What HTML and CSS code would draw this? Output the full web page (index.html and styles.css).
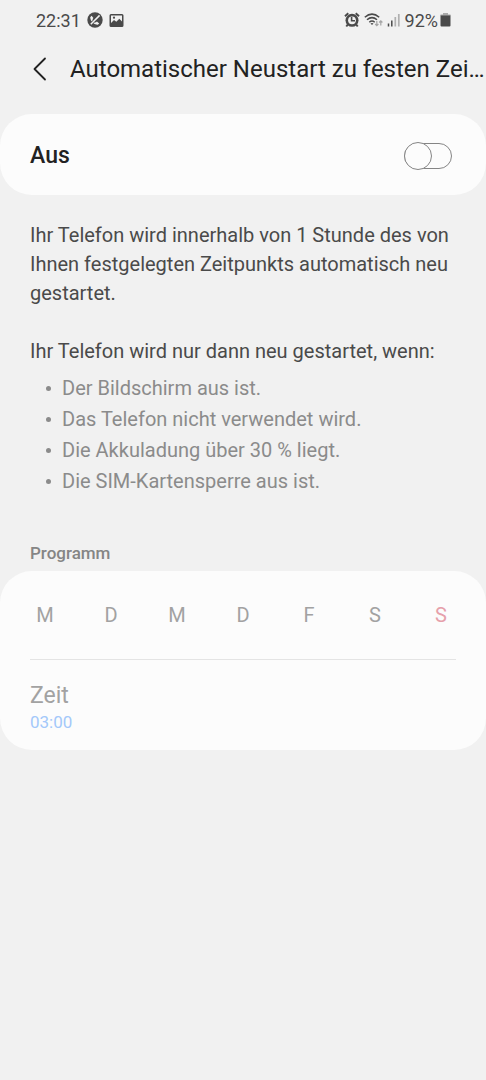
FILE: index.html
```html
<!DOCTYPE html>
<html lang="de">
<head>
<meta charset="utf-8">
<meta name="viewport" content="width=device-width, initial-scale=1">
<title>Automatischer Neustart zu festen Zeiten</title>
<link rel="stylesheet" href="styles.css">
</head>
<body>
<div class="status">
  <div class="status-group">
    <span class="clock">22:31</span>
    <svg class="icon" width="16" height="16" viewBox="0 0 16 16" aria-hidden="true">
      <circle cx="8" cy="8" r="7.7" fill="#4a4a4a"/>
      <path d="M3.2 5.2C3.6 9.6 6.4 12.400 10.800 12.800L12.200 11.400L9.900 9.600L8.800 10.500C7.300 9.900 6.100 8.700 5.500 7.200L6.400 6.100L4.600 3.800Z" fill="#f1f1f1"/>
      <path d="M12.800 3.200L3.600 12.400" stroke="#4a4a4a" stroke-width="3"/>
      <path d="M12.600 3.400L3.800 12.200" stroke="#f1f1f1" stroke-width="1.500"/>
    </svg>
    <svg class="icon" width="15" height="15" viewBox="0 0 15 15" aria-hidden="true">
      <path fill="#4a4a4a" fill-rule="evenodd" d="M2 1H13Q14.500 1 14.500 2.500V12.500Q14.500 14 13 14H2Q.5 14 .5 12.500V2.500Q.5 1 2 1ZM2 2.500V10L5 7L7.300 8.800L10.300 5.800L13 8.500V2.500Z"/>
      <circle cx="5" cy="4.700" r="1.100" fill="#4a4a4a"/>
    </svg>
  </div>
  <div class="status-group status-right">
    <svg width="16" height="16" viewBox="0 0 16 16" aria-hidden="true">
      <circle cx="8" cy="8.300" r="6.500" fill="#4a4a4a"/>
      <path d="M1 4.200L4.300 1.300M15 4.200L11.700 1.300M3.800 12.500L2.300 14.500M12.200 12.500L13.700 14.500" stroke="#4a4a4a" stroke-width="2"/>
      <circle cx="8" cy="8.300" r="3.900" fill="#f1f1f1"/>
      <path d="M7.600 5V8.800H11" fill="none" stroke="#4a4a4a" stroke-width="1.600"/>
    </svg>
    <svg width="19" height="16" viewBox="0 0 19 16" aria-hidden="true">
      <g fill="none" stroke="#4a4a4a" stroke-width="1.500">
        <path d="M.8 5.300Q8 -1 15.200 5.300"/>
        <path d="M3 7.800Q8 3.400 13 7.800"/>
        <path d="M5.300 10.200Q8 7.900 10.700 10.200"/>
      </g>
      <path d="M6.500 11.500Q8 10.300 9.500 11.500L8 13Z" fill="#4a4a4a"/>
      <path d="M12.800 9V13.500M11.200 12L12.800 13.700L14.400 12M16.800 13.500V9M15.200 10.500L16.800 8.800L18.400 10.500" fill="none" stroke="#a5a5a5" stroke-width="1.200"/>
    </svg>
    <svg width="14" height="14" viewBox="0 0 14 14" aria-hidden="true">
      <path d="M1.500 10.500V13.500M4.800 7.500V13.500" stroke="#4a4a4a" stroke-width="1.500"/>
      <path d="M8.300 4V13.500M11.800 1V13.500" stroke="#b0b0b0" stroke-width="1.700"/>
    </svg>
    <span class="battery">92%<svg width="11" height="16" viewBox="0 0 11 16" aria-hidden="true">
      <path d="M3 1H8V2.500H10.500V4H.5V2.500H3Z" fill="#aaa"/>
      <path d="M.5 3.500H10.500V13.500Q10.500 14.500 9.500 14.500H1.500Q.5 14.500 .5 13.500Z" fill="#4a4a4a"/>
    </svg></span>
  </div>
</div>

<header class="header">
  <button class="back" type="button" aria-label="Zurück">
    <svg width="14" height="24" viewBox="0 0 14 24" aria-hidden="true">
      <path d="M12 1.500L1.500 12L12 22.500" fill="none" stroke="#222" stroke-width="1.800" stroke-linecap="round" stroke-linejoin="round"/>
    </svg>
  </button>
  <h1 class="title">Automatischer Neustart zu festen Zeiten</h1>
</header>

<main>
  <section class="card toggle-row">
    <label class="toggle-label" for="restart">Aus</label>
    <input class="switch" id="restart" type="checkbox" role="switch">
  </section>

  <section class="info">
    <p>Ihr Telefon wird innerhalb von 1 Stunde des von Ihnen festgelegten Zeitpunkts automatisch neu gestartet.</p>
    <p>Ihr Telefon wird nur dann neu gestartet, wenn:</p>
    <ul class="conditions">
      <li>Der Bildschirm aus ist.</li>
      <li>Das Telefon nicht verwendet wird.</li>
      <li>Die Akkuladung über 30 % liegt.</li>
      <li>Die SIM-Kartensperre aus ist.</li>
    </ul>
  </section>

  <h2 class="section-title">Programm</h2>
  <section class="card schedule">
    <div class="days">
      <button class="day" type="button" disabled aria-label="Montag">M</button>
      <button class="day" type="button" disabled aria-label="Dienstag">D</button>
      <button class="day" type="button" disabled aria-label="Mittwoch">M</button>
      <button class="day" type="button" disabled aria-label="Donnerstag">D</button>
      <button class="day" type="button" disabled aria-label="Freitag">F</button>
      <button class="day" type="button" disabled aria-label="Samstag">S</button>
      <button class="day sunday" type="button" disabled aria-label="Sonntag">S</button>
    </div>
    <button class="time" type="button" disabled>
      <span class="time-label">Zeit</span>
      <span class="time-value">03:00</span>
    </button>
  </section>
</main>
</body>
</html>
```
FILE: styles.css
```css
* {
  box-sizing: border-box;
}

body {
  margin: 0;
  min-height: 100vh;
  background: #f1f1f1;
  color: #4a4a4a;
  font-family: Roboto, "Liberation Sans", sans-serif;
  font-size: 20px;
  line-height: 29px;
}

button {
  padding: 0;
  border: 0;
  background: none;
  font: inherit;
  color: inherit;
}

h1,
h2,
p,
ul {
  margin: 0;
  padding: 0;
}

svg {
  display: block;
  flex: none;
}

.status {
  display: flex;
  justify-content: space-between;
  align-items: center;
  height: 40px;
  padding: 0 35px 0 36px;
  font-size: 18px;
}

.status-group {
  display: flex;
  align-items: center;
  gap: 6px;
}

.status-right {
  gap: 4px;
}

.battery {
  display: flex;
  align-items: center;
  gap: 2px;
}

.header {
  display: flex;
  align-items: center;
  height: 58px;
  padding-left: 33px;
}

.back {
  flex: none;
  width: 37px;
}

.title {
  flex: 1;
  min-width: 0;
  overflow: hidden;
  text-overflow: ellipsis;
  white-space: nowrap;
  color: #222;
  font-size: 24px;
  font-weight: 400;
}

.card {
  border-radius: 32px;
  background: #fcfcfc;
}

.toggle-row {
  display: flex;
  align-items: center;
  justify-content: space-between;
  margin-top: 16px;
  padding: 27px 34px 25px 30px;
}

.toggle-label {
  color: #222;
  font-size: 23px;
  font-weight: 500;
}

.switch {
  appearance: none;
  display: grid;
  align-items: center;
  width: 48px;
  height: 28px;
  margin: 0;
}

.switch::before,
.switch::after {
  content: "";
  grid-area: 1 / 1;
  box-sizing: border-box;
  border: 1px solid #858585;
  border-radius: 14px;
  background: #fcfcfc;
}

.switch::before {
  height: 26px;
}

.switch::after {
  width: 28px;
  height: 28px;
}

.switch:checked::after {
  justify-self: end;
}

.info {
  padding: 26px 30px 0;
}

.info p + p {
  margin-top: 29px;
}

.conditions {
  margin-top: 7px;
  color: #8b8b8b;
  line-height: 31px;
  list-style: none;
}

.conditions li {
  display: flex;
  align-items: center;
  padding-left: 16px;
}

.conditions li::before {
  content: "";
  width: 5px;
  height: 5px;
  margin-right: 11px;
  border-radius: 50%;
  background: #8b8b8b;
}

.section-title {
  margin-top: 42px;
  padding: 0 30px;
  color: #858585;
  font-size: 17px;
  font-weight: 500;
}

.schedule {
  margin-top: 3px;
  padding: 0 30px;
  color: #a2a2a2;
}

.days {
  display: flex;
  justify-content: space-between;
  padding: 29px 0;
  border-bottom: 1px solid #e4e4e4;
}

.day {
  width: 30px;
  height: 30px;
}

.sunday {
  color: #e6a0aa;
}

.time {
  display: flex;
  flex-direction: column;
  width: 100%;
  padding: 21px 0 16px;
  text-align: left;
}

.time-label {
  font-size: 23px;
}

.time-value {
  color: #a3c8fa;
  font-size: 17px;
  line-height: 24px;
}
```
